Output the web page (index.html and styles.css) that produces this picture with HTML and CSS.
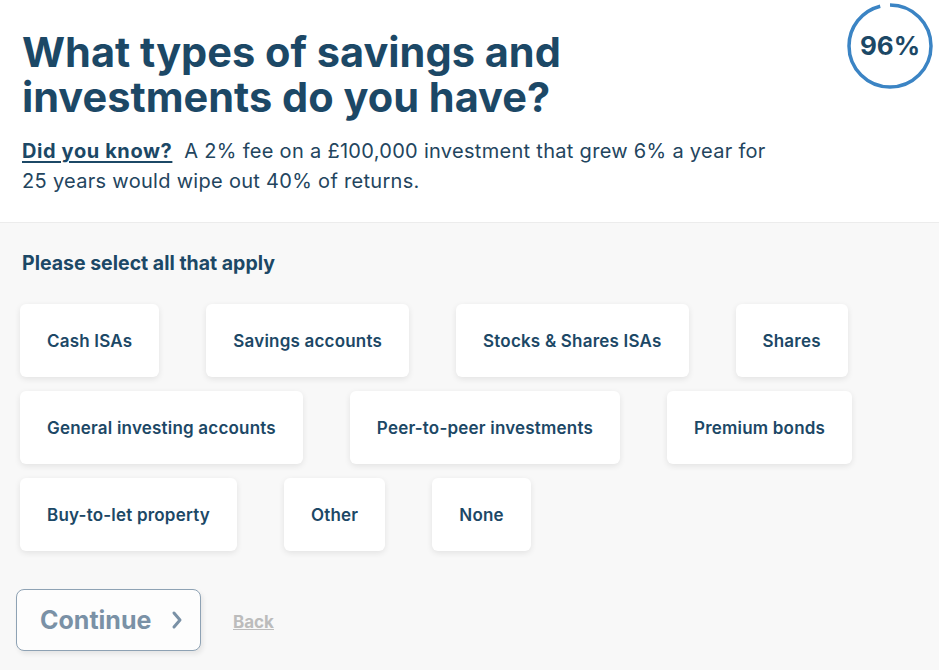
FILE: index.html
```html
<!DOCTYPE html>
<html lang="en">
<head>
    <meta charset="UTF-8">
    <meta name="viewport" content="width=device-width, initial-scale=1.0">
    <title>Savings and investments</title>
    <link rel="stylesheet" href="styles.css">
</head>
<body>

<div class="question-header">
    <div class="question-text">
        <h1>What types of savings and investments do you have?</h1>
        <p class="did-you-know"><strong>Did you know?</strong>&nbsp; A 2% fee on a £100,000 investment that grew 6% a year for 25 years would wipe out 40% of returns.</p>
    </div>
    <div class="progress">
        <svg width="90" height="90" viewBox="0 0 90 90">
            <circle class="progress-track" cx="45" cy="45" r="41" />
            <circle class="progress-bar" cx="45" cy="45" r="41" />
        </svg>
        <span class="progress-label">96%</span>
    </div>
</div>

<div class="question-body">
    <p class="select-label">Please select all that apply</p>

    <div class="options">
        <button class="option">Cash ISAs</button>
        <button class="option">Savings accounts</button>
        <button class="option">Stocks &amp; Shares ISAs</button>
        <button class="option">Shares</button>
        <button class="option">General investing accounts</button>
        <button class="option">Peer-to-peer investments</button>
        <button class="option">Premium bonds</button>
        <button class="option">Buy-to-let property</button>
        <button class="option">Other</button>
        <button class="option">None</button>
    </div>

    <div class="actions">
        <button class="continue">
            Continue
            <svg width="16" height="22" viewBox="0 0 16 22">
                <path d="M5 4 L11 11 L5 18" />
            </svg>
        </button>
        <a href="#" class="back">Back</a>
    </div>
</div>

</body>
</html>
```

FILE: styles.css
```css
body {
    font-family: Inter, "Noto Sans", sans-serif;
    background: #f8f8f8;
    color: #1c4866;
    margin: 0;
    padding: 0;
}

.question-header {
    display: flex;
    justify-content: space-between;
    align-items: flex-start;
    background: #fff;
    border-bottom: 1px solid #ececec;
    padding: 0 4px 26px 22px;
}

h1 {
    font-size: 41.5px;
    line-height: 45px;
    font-weight: 700;
    max-width: 620px;
    margin: 30px 0 0 0;
}

.did-you-know {
    font-size: 20px;
    line-height: 30px;
    letter-spacing: 0.3px;
    max-width: 770px;
    margin: 16px 0 0 0;
    color: #23455e;
}

.did-you-know strong {
    text-decoration: underline;
    text-underline-offset: 3px;
    letter-spacing: 0.6px;
    color: #1c4866;
}

.progress {
    position: relative;
    width: 90px;
    height: 90px;
    margin-top: 1px;
    flex-shrink: 0;
}

.progress svg {
    transform: rotate(-90deg);
}

.progress-track {
    fill: none;
    stroke: #fff;
    stroke-width: 3.5;
}

.progress-bar {
    fill: none;
    stroke: #3b84c4;
    stroke-width: 3.5;
    /* circumference 257.6, 96% of it */
    stroke-dasharray: 247.3 300;
}

.progress-label {
    position: absolute;
    top: 0;
    left: 0;
    width: 90px;
    line-height: 90px;
    text-align: center;
    font-size: 26px;
    font-weight: 700;
    color: #1c4866;
}

.question-body {
    padding: 28px 20px 20px 20px;
}

.select-label {
    font-size: 19.5px;
    line-height: 24px;
    font-weight: 700;
    margin: 0 0 29px 2px;
}

.options {
    display: flex;
    flex-wrap: wrap;
    column-gap: 47px;
    row-gap: 14px;
    max-width: 880px;
}

.option {
    font-family: Inter, "Noto Sans", sans-serif;
    height: 73px;
    padding: 0 27px;
    font-size: 17px;
    font-weight: 600;
    letter-spacing: 0.2px;
    color: #1c4866;
    background: #fff;
    border: none;
    border-radius: 6px;
    box-shadow: 0 2px 6px rgba(0, 0, 0, 0.09);
    cursor: pointer;
}

.actions {
    display: flex;
    align-items: center;
    gap: 32px;
    margin: 38px 0 0 -4px;
}

.continue {
    font-family: Inter, "Noto Sans", sans-serif;
    display: flex;
    align-items: center;
    gap: 18px;
    width: 185px;
    height: 62px;
    padding: 0 0 0 23px;
    font-size: 25px;
    font-weight: 700;
    color: #7a91a6;
    background: #fdfdfd;
    border: 1px solid #8ea2b4;
    border-radius: 8px;
    box-shadow: 2px 3px 5px rgba(0, 0, 0, 0.08);
    cursor: pointer;
}

.continue path {
    fill: none;
    stroke: #7a91a6;
    stroke-width: 3;
    stroke-linecap: round;
    stroke-linejoin: round;
}

.back {
    font-size: 17px;
    font-weight: 700;
    color: #bcbcbc;
    margin-top: 4px;
}
```
